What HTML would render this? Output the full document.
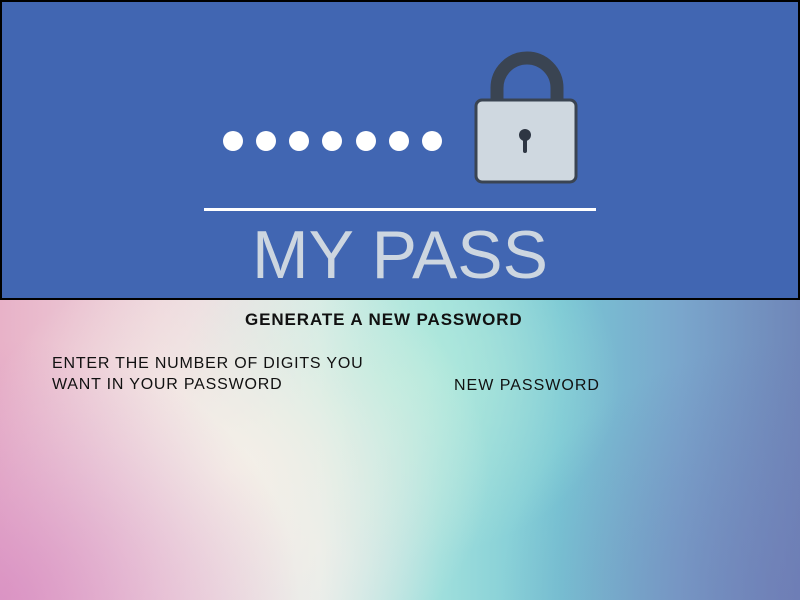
<!DOCTYPE html>
<html><head><style>
html,body{margin:0;padding:0;width:800px;height:600px;overflow:hidden;font-family:"Liberation Sans",sans-serif}
body{position:relative;background:
radial-gradient(ellipse 300px 260px at 0px 600px, rgba(215,140,195,0.8), rgba(215,140,195,0) 100%),
radial-gradient(ellipse 300px 260px at 800px 600px, rgba(110,120,180,0.6), rgba(110,120,180,0) 100%),
radial-gradient(ellipse 260px 220px at 230px 470px, rgba(245,240,232,1), rgba(245,240,232,0) 100%),
radial-gradient(ellipse 220px 180px at 400px 380px, rgba(180,235,220,0.9), rgba(180,235,220,0) 100%),
linear-gradient(90deg,#e8b2c8 0%,#eed6dc 20%,#e6ecea 40%,#9fdfdc 55%,#78c6d4 70%,#7aa6cc 85%,#6f86b8 100%);}
.hdr{position:absolute;left:0;top:0;width:796px;height:296px;border:2px solid #000;background:#4166b2}
.dot{position:absolute;top:129px;width:20px;height:20px;border-radius:50%;background:#fff}
.line{position:absolute;left:202px;top:206px;width:392px;height:3px;background:#fff}
.title{position:absolute;left:0;width:796px;top:214px;text-align:center;font-size:68px;color:#cdd6e0;letter-spacing:0px}
.t{position:absolute;color:#111;font-size:17px}
</style></head><body>
<div class="hdr">
<div class="dot" style="left:221px"></div><div class="dot" style="left:254px"></div><div class="dot" style="left:287px"></div><div class="dot" style="left:320px"></div><div class="dot" style="left:354px"></div><div class="dot" style="left:387px"></div><div class="dot" style="left:420px"></div>
<svg style="position:absolute;left:0;top:0" width="796" height="296">
<path d="M495 100 V86 A30 30 0 0 1 555 86 V100" fill="none" stroke="#3a4452" stroke-width="13"/>
<rect x="474" y="98" width="100" height="82" rx="6" fill="#cfd8e0" stroke="#3a4452" stroke-width="3"/>
<circle cx="523" cy="133" r="6" fill="#2e3643"/>
<rect x="521" y="133" width="4" height="18" rx="2" fill="#2e3643"/>
</svg>
<div class="line"></div>
<div class="title">MY PASS</div>
</div>
<div class="t" style="left:245px;top:310px;font-weight:bold;font-size:17px;letter-spacing:0.9px;white-space:nowrap">GENERATE A NEW PASSWORD</div>
<div class="t" style="left:52px;top:353px;line-height:21px;font-size:16px;letter-spacing:0.8px;white-space:nowrap">ENTER THE NUMBER OF DIGITS YOU<br>WANT IN YOUR PASSWORD</div>
<div class="t" style="left:454px;top:377px;font-size:16px;letter-spacing:1px">NEW PASSWORD</div>
</body></html>
